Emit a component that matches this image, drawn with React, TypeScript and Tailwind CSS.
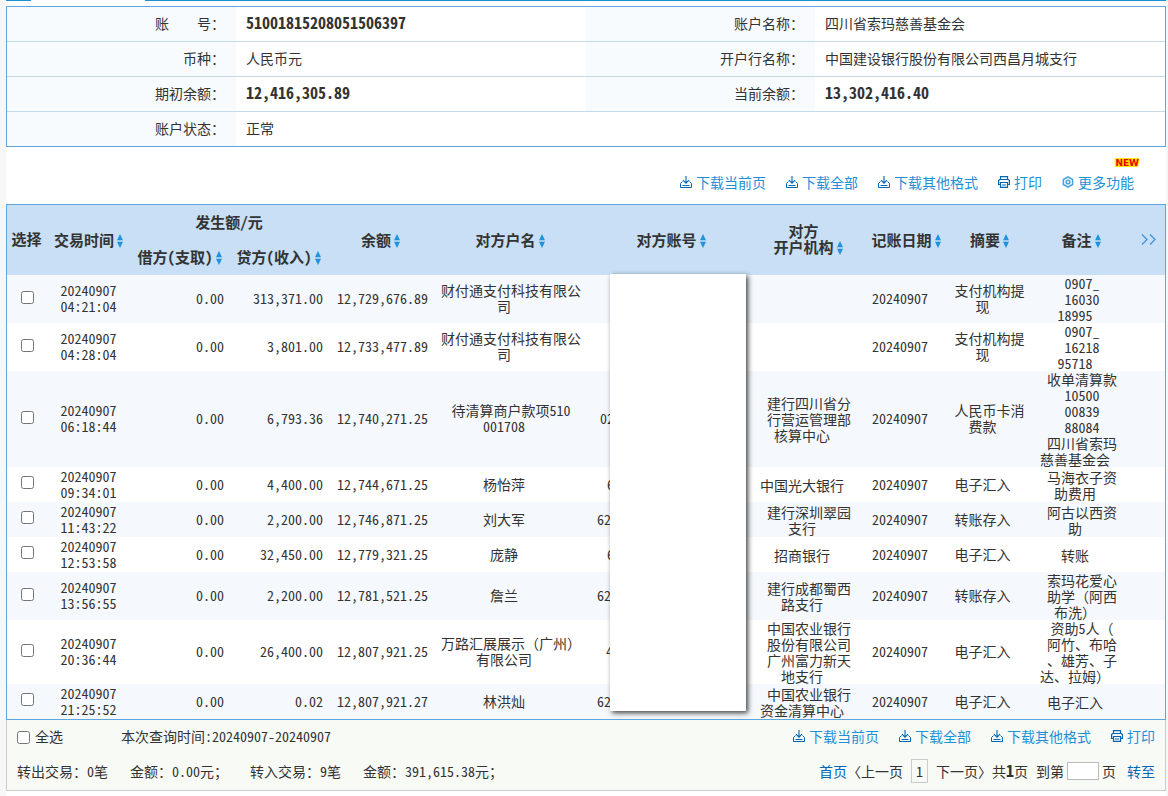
import React from "react";

const DownloadIcon = () => (
  <svg width="12" height="12" viewBox="0 0 12 12" fill="none" stroke="#0066b3" aria-hidden="true" className="shrink-0">
    <path d="M6 0V7M3 4.2L6 7.2L9 4.2" strokeWidth="1.1" />
    <path d="M2.5 5.5L0.5 7.5V11.5H11.5V7.5L9.5 5.5M2.5 9.5H9.5" />
  </svg>
);

const PrintIcon = () => (
  <svg width="12" height="12" viewBox="0 0 12 12" fill="none" stroke="#0066b3" strokeWidth="1.2" aria-hidden="true" className="shrink-0">
    <path d="M2.5 3.5V0.6H9.5V3.5M2.5 8.5H0.6V4.5L1.6 3.5H10.4L11.4 4.5V8.5H9.5" />
    <path d="M2.5 6.5H9.5V11.4H2.5ZM4 9H8" />
  </svg>
);

const GearIcon = () => (
  <svg width="12" height="12" viewBox="0 0 12 12" fill="none" stroke="#4aa6dc" aria-hidden="true" className="shrink-0">
    <path strokeWidth="1.6" d="M6 1L10.6 3.5V8.5L6 11L1.4 8.5V3.5Z" />
    <circle cx="6" cy="6" r="1.8" strokeWidth="1.6" />
  </svg>
);

const SortIcon = () => (
  <svg width="6" height="14" viewBox="0 0 6 14" fill="#1f93dc" aria-hidden="true" className="shrink-0">
    <path d="M3 0L6 6.2H0ZM3 14L0 7.8H6Z" />
  </svg>
);

const Action = ({ icon, children }: { icon: React.ReactNode; children: React.ReactNode }) => (
  <a href="#" className="flex items-center gap-1 text-[#1f8fd6]">
    {icon}
    <span>{children}</span>
  </a>
);

const DownloadActions = () => (
  <>
    <Action icon={<DownloadIcon />}>下载当前页</Action>
    <Action icon={<DownloadIcon />}>下载全部</Action>
    <Action icon={<DownloadIcon />}>下载其他格式</Action>
    <Action icon={<PrintIcon />}>打印</Action>
  </>
);

const Sortable = ({ children }: { children: React.ReactNode }) => (
  <button type="button" className="inline-flex items-end gap-[3px] align-middle font-bold leading-4">
    <span>{children}</span>
    <SortIcon />
  </button>
);

const Lines = ({ lines }: { lines: string[] }) => (
  <>
    {lines.map((line, i) => (
      <span key={i} className="block whitespace-nowrap last:pr-3.5">
        {line}
      </span>
    ))}
  </>
);

type Row = {
  time: string;
  credit: string;
  balance: string;
  name: string[];
  account: string;
  accountPad: string;
  bank: string[];
  summary: string[];
  remark: string[];
};

const rows: Row[] = [
  { time: "04:21:04", credit: "313,371.00", balance: "12,729,676.89", name: ["财付通支付科技有限公", "司"], account: "", accountPad: "", bank: [], summary: ["支付机构提", "现"], remark: ["0907_", "16030", "18995"] },
  { time: "04:28:04", credit: "3,801.00", balance: "12,733,477.89", name: ["财付通支付科技有限公", "司"], account: "", accountPad: "", bank: [], summary: ["支付机构提", "现"], remark: ["0907_", "16218", "95718"] },
  { time: "06:18:44", credit: "6,793.36", balance: "12,740,271.25", name: ["待清算商户款项510", "001708"], account: "02", accountPad: "pl-3", bank: ["建行四川省分", "行营运管理部", "核算中心"], summary: ["人民币卡消", "费款"], remark: ["收单清算款", "10500", "00839", "88084", "四川省索玛", "慈善基金会"] },
  { time: "09:34:01", credit: "4,400.00", balance: "12,744,671.25", name: ["杨怡萍"], account: "6", accountPad: "pl-[19px]", bank: ["中国光大银行"], summary: ["电子汇入"], remark: ["马海衣子资", "助费用"] },
  { time: "11:43:22", credit: "2,200.00", balance: "12,746,871.25", name: ["刘大军"], account: "62", accountPad: "pl-[9px]", bank: ["建行深圳翠园", "支行"], summary: ["转账存入"], remark: ["阿古以西资", "助"] },
  { time: "12:53:58", credit: "32,450.00", balance: "12,779,321.25", name: ["庞静"], account: "6", accountPad: "pl-[19px]", bank: ["招商银行"], summary: ["电子汇入"], remark: ["转账"] },
  { time: "13:56:55", credit: "2,200.00", balance: "12,781,521.25", name: ["詹兰"], account: "62", accountPad: "pl-[9px]", bank: ["建行成都蜀西", "路支行"], summary: ["转账存入"], remark: ["索玛花爱心", "助学（阿西", "布洗）"] },
  { time: "20:36:44", credit: "26,400.00", balance: "12,807,921.25", name: ["万路汇展展示（广州）", "有限公司"], account: "4", accountPad: "pl-[18px]", bank: ["中国农业银行", "股份有限公司", "广州富力新天", "地支行"], summary: ["电子汇入"], remark: ["资助5人（", "阿竹、布哈", "、雄芳、子", "达、拉姆）"] },
  { time: "21:25:52", credit: "0.02", balance: "12,807,921.27", name: ["林洪灿"], account: "62", accountPad: "pl-[9px]", bank: ["中国农业银行", "资金清算中心"], summary: ["电子汇入"], remark: ["电子汇入"] },
];

const infoLabel = "bg-[#f8fbfe] pb-0.5 pr-[11px] text-right font-normal";
const infoValue = "pb-0.5 pl-[10px] text-left";
const infoNumber = "text-base leading-4 font-bold";

export default function App() {
  return (
    <div lang="zh-CN" className="min-h-screen bg-[#f7f7f7] pl-1.5 pr-0.5 font-['Noto_Sans_Mono_CJK_SC','Noto_Sans_CJK_SC',sans-serif] text-sm leading-4 text-[#333]">
      <main className="min-h-screen bg-white">
        <div className="flex h-px">
          <div className="w-[25px] bg-[#1f8fd6]" />
          <div className="w-[114px]" />
          <div className="flex-1 bg-[#1f8fd6]" />
        </div>

        <div className="mt-[5px] border border-[#5fa5e0]">
          <table className="w-full table-fixed border-collapse [&_tr]:h-[35px] [&_tr:first-child]:h-[34px] [&_tr:not(:last-child)]:border-b [&_tr]:border-[#c5d9ea]">
            <colgroup>
              <col className="w-[229px]" />
              <col />
              <col className="w-[229px]" />
              <col />
            </colgroup>
            <tbody>
              <tr>
                <th scope="row" className={infoLabel}>账　　号：</th>
                <td className={infoValue}><span className={infoNumber}>51001815208051506397</span></td>
                <th scope="row" className={infoLabel}>账户名称：</th>
                <td className={infoValue}>四川省索玛慈善基金会</td>
              </tr>
              <tr>
                <th scope="row" className={infoLabel}>币种：</th>
                <td className={infoValue}>人民币元</td>
                <th scope="row" className={infoLabel}>开户行名称：</th>
                <td className={infoValue}>中国建设银行股份有限公司西昌月城支行</td>
              </tr>
              <tr>
                <th scope="row" className={infoLabel}>期初余额：</th>
                <td className={infoValue}><span className={infoNumber}>12,416,305.89</span></td>
                <th scope="row" className={infoLabel}>当前余额：</th>
                <td className={infoValue}><span className={infoNumber}>13,302,416.40</span></td>
              </tr>
              <tr>
                <th scope="row" className={infoLabel}>账户状态：</th>
                <td className={infoValue} colSpan={3}>正常</td>
              </tr>
            </tbody>
          </table>
        </div>

        <div className="flex h-[57px] items-end justify-end gap-5 pb-[14px] pr-8">
          <DownloadActions />
          <div className="relative">
            <Action icon={<GearIcon />}>更多功能</Action>
            <span className="absolute -right-[5px] -top-4 font-['DejaVu_Sans',sans-serif] text-[9px] font-bold leading-[10px] text-[#f00000] [text-shadow:1px_0_#ffe600,-1px_0_#ffe600,0_1px_#ffe600,0_-1px_#ffe600,1px_1px_#ffe600,-1px_-1px_#ffe600,1px_-1px_#ffe600,-1px_1px_#ffe600]">NEW</span>
          </div>
        </div>

        <div className="relative border border-[#5fa5e0]">
          <table className="w-full table-fixed border-collapse text-center">
            <colgroup>
              <col className="w-[41px]" />
              <col className="w-[83px]" />
              <col className="w-[99px]" />
              <col className="w-[99px]" />
              <col className="w-[105px]" />
              <col className="w-[154px]" />
              <col className="w-[168px]" />
              <col className="w-[106px]" />
              <col className="w-[90px]" />
              <col className="w-[77px]" />
              <col className="w-[106px]" />
              <col className="w-[30px]" />
            </colgroup>
            <thead className="bg-[#c8dff5] text-[15px] leading-4 [&_th]:whitespace-nowrap [&_th]:pb-0.5 [&_th]:pr-0.5 [&_tr]:h-[35px]">
              <tr>
                <th rowSpan={2}>选择</th>
                <th rowSpan={2}><Sortable>交易时间</Sortable></th>
                <th colSpan={2}>发生额/元</th>
                <th rowSpan={2}><Sortable>余额</Sortable></th>
                <th rowSpan={2}><Sortable>对方户名</Sortable></th>
                <th rowSpan={2}><Sortable>对方账号</Sortable></th>
                <th rowSpan={2}><Sortable>对方<br />开户机构</Sortable></th>
                <th rowSpan={2}><Sortable>记账日期</Sortable></th>
                <th rowSpan={2}><Sortable>摘要</Sortable></th>
                <th rowSpan={2}><Sortable>备注</Sortable></th>
                <th rowSpan={2}>
                  <button type="button" aria-label="更多列" className="block pl-1.5">
                    <svg width="15" height="11" viewBox="0 0 15 11" fill="none" stroke="#3f93dc" strokeWidth="1.3" aria-hidden="true">
                      <path d="M1 0.5L6 5.5L1 10.5M9 0.5L14 5.5L9 10.5" />
                    </svg>
                  </button>
                </th>
              </tr>
              <tr>
                <th><Sortable>借方(支取)</Sortable></th>
                <th><Sortable>贷方(收入)</Sortable></th>
              </tr>
            </thead>
            <tbody>
              {rows.map((r) => (
                <tr key={r.time} className="h-[35px] odd:bg-[#f5f9fd]">
                  <td className="pb-1">
                    <input type="checkbox" aria-label={r.time} className="mx-auto block size-[13px]" />
                  </td>
                  <td className="pb-0.5 pr-0.5">20240907<br />{r.time}</td>
                  <td className="pb-0.5 pr-1.5 text-right">0.00</td>
                  <td className="pb-0.5 pr-1.5 text-right">{r.credit}</td>
                  <td className="pb-0.5 pr-1.5 text-right">{r.balance}</td>
                  <td className="pb-0.5"><Lines lines={r.name} /></td>
                  <td className="pb-0.5 text-left"><span className={r.accountPad}>{r.account}</span></td>
                  <td><Lines lines={r.bank} /></td>
                  <td className="pb-0.5 pr-3.5">20240907</td>
                  <td className="pb-0.5 pr-0.5"><Lines lines={r.summary} /></td>
                  <td><Lines lines={r.remark} /></td>
                  <td />
                </tr>
              ))}
            </tbody>
          </table>
          <div className="absolute left-[603px] top-[69px] h-[437px] w-[136px] bg-white shadow-[2px_2px_5px_rgba(0,0,0,0.75)]" />
        </div>

        <div className="border border-t-0 border-[#ccc] bg-[#f8faf6] px-[10px]">
          <div className="flex h-[35px] items-center justify-between pb-1">
            <div className="flex items-center">
              <label className="flex items-center gap-[5px]">
                <input type="checkbox" className="mt-1 size-[13px]" />
                全选
              </label>
              <span className="ml-[58px]">本次查询时间:20240907-20240907</span>
            </div>
            <div className="flex items-center gap-5">
              <DownloadActions />
            </div>
          </div>
          <div className="flex h-[35px] items-center justify-between pb-1">
            <div className="flex gap-[22px]">
              <span>转出交易：0笔</span>
              <span>金额：0.00元；</span>
              <span>转入交易：9笔</span>
              <span>金额：391,615.38元；</span>
            </div>
            <div className="flex items-center">
              <a href="#" className="text-[#0066b3]">首页</a>
              <a href="#">〈上一页</a>
              <span className="mx-2 flex h-6 w-[17px] items-center justify-center border border-[#ccc]">1</span>
              <a href="#">下一页〉</a>
              <span>共<b className="text-base leading-4">1</b>页</span>
              <label className="ml-2 flex items-center gap-[3px]">
                到第
                <input type="text" aria-label="页码" className="h-[18px] w-8 border border-[#bbb] bg-white" />
                页
              </label>
              <a href="#" className="ml-[11px] text-[#0066b3]">转至</a>
            </div>
          </div>
        </div>
      </main>
    </div>
  );
}
